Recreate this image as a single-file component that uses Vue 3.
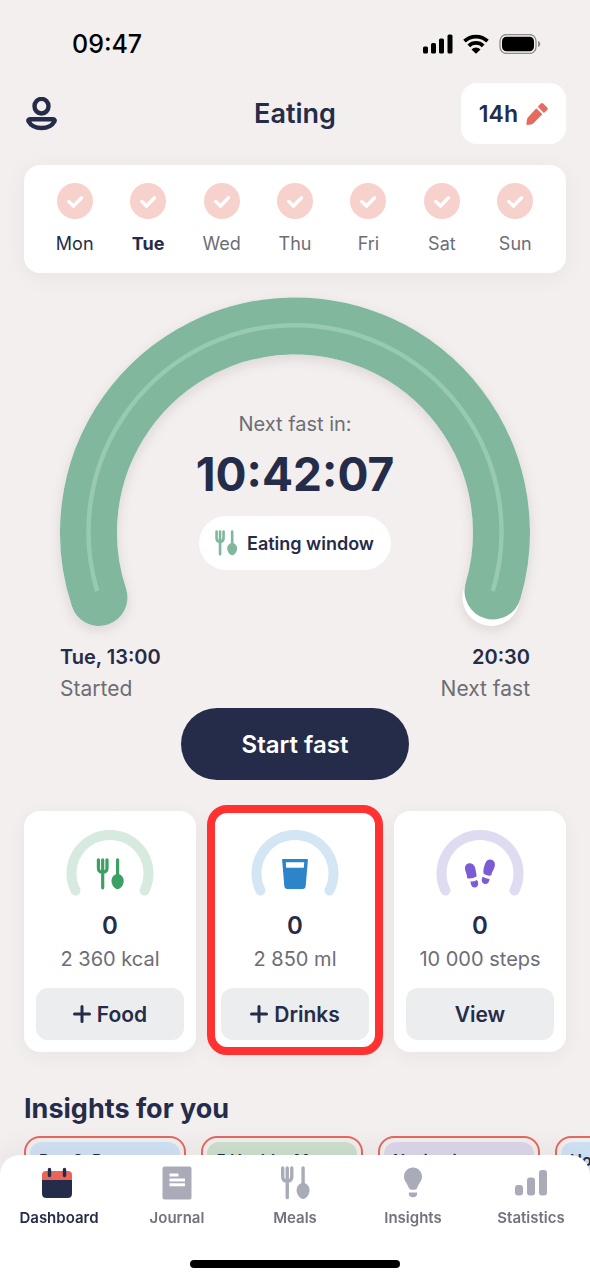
<script setup>
const days = [
  { name: 'Mon', state: 'past' },
  { name: 'Tue', state: 'today' },
  { name: 'Wed', state: '' },
  { name: 'Thu', state: '' },
  { name: 'Fri', state: '' },
  { name: 'Sat', state: '' },
  { name: 'Sun', state: '' }
]

const trackers = [
  { id: 'food', value: '0', goal: '2 360 kcal', action: 'Food', add: true },
  { id: 'drinks', value: '0', goal: '2 850 ml', action: 'Drinks', add: true, highlighted: true },
  { id: 'steps', value: '0', goal: '10 000 steps', action: 'View', add: false }
]

const insights = [
  { title: 'Day 2: Pro', tone: 'blue' },
  { title: '5 Healthy Meat', tone: 'green' },
  { title: 'Navigating', tone: 'purple' },
  { title: 'Ho', tone: 'blue' }
]

const tabs = [
  { id: 'dashboard', label: 'Dashboard', active: true },
  { id: 'journal', label: 'Journal' },
  { id: 'meals', label: 'Meals' },
  { id: 'insights', label: 'Insights' },
  { id: 'statistics', label: 'Statistics' }
]
</script>

<template>
  <div class="page">
    <svg class="defs" width="0" height="0" aria-hidden="true">
      <symbol id="cutlery" viewBox="0 0 28 32">
        <path d="M2.4 1.8v8.2q0 4.2 4.3 4.2t4.3-4.2V1.8M6.7 1.8v28M21.6 1.8v18" fill="none" stroke="currentColor" stroke-width="3.200" stroke-linecap="round" stroke-linejoin="round" />
        <path d="M21.6 16c3.4 0 6.1 3.2 6.1 6.9 0 3.6-2.9 8.1-6.1 8.1s-6.1-4.5-6.1-8.1c0-3.7 2.700-6.900 6.100-6.900z" fill="currentColor" />
      </symbol>
    </svg>

    <div class="status">
      <span class="clock">09:47</span>
      <div class="signals">
        <svg width="30" height="20" viewBox="0 0 30 20" aria-hidden="true">
          <rect x="0" y="12.500" width="5" height="7" rx="1.500" />
          <rect x="8" y="9" width="5" height="10.500" rx="1.500" />
          <rect x="16" y="4.500" width="5" height="15" rx="1.500" />
          <rect x="24.500" y="0.500" width="5" height="19" rx="1.500" />
        </svg>
        <svg width="26" height="20" viewBox="0 0 26 20" aria-hidden="true">
          <path d="M1.500 7.200a16.500 16.500 0 0 1 23 0M5.800 11.800a10.300 10.300 0 0 1 14.400 0" fill="none" stroke="#000" stroke-width="3.800" />
          <path d="M13 19.800l-4.500-4.400a6.500 6.500 0 0 1 9 0z" />
        </svg>
        <svg width="42" height="20" viewBox="0 0 42 20" aria-hidden="true">
          <rect x="1" y="0.500" width="36" height="19" rx="6.500" fill="none" stroke="#8f8c8c" stroke-width="1.300" />
          <rect x="3" y="2.800" width="32" height="14.400" rx="4.500" />
          <path d="M39 6.800c3 1.500 3 5 0 6.500z" fill="#8f8c8c" />
        </svg>
      </div>
    </div>

    <header class="header">
      <button class="profile" aria-label="Profile">
        <svg width="32" height="34" viewBox="0 0 32 34" fill="none" stroke="#252c49" stroke-width="4.400" aria-hidden="true">
          <ellipse cx="15.500" cy="9.200" rx="7" ry="7.300" />
          <path d="M4 22.200h23c1.600 0 2 1.200 1.400 2.300-2.200 4-7 6.500-12.900 6.500S4.800 28.500 2.600 24.500C2 23.400 2.400 22.200 4 22.200z" />
        </svg>
      </button>
      <h1>Eating</h1>
      <button class="plan">
        <span>14h</span>
        <svg width="22" height="24" viewBox="0 0 22 24" fill="#e76a60" aria-hidden="true">
          <path d="M10.300 6.200l6 6L7.500 21.300q-1 1-2.500 1.200L1.200 23q-.9 0-.8-.9l.5-4.200q.2-1.500 1.200-2.600z" />
          <path d="M11.800 4.700l3-3.200q1.200-1.200 2.400 0l4 4q1.100 1.200 0 2.400l-3.300 3z" />
        </svg>
      </button>
    </header>

    <section class="week" aria-label="Week">
      <div v-for="day in days" :key="day.name" class="day" :class="day.state">
        <svg width="36" height="36" viewBox="0 0 36 36" aria-hidden="true">
          <circle cx="18" cy="18" r="18" fill="#f7d1cc" />
          <path d="M11.800 18.500l4.700 4.500 8-8.300" fill="none" stroke="#fff" stroke-width="3.400" stroke-linecap="round" />
        </svg>
        <span>{{ day.name }}</span>
      </div>
    </section>

    <section class="timer">
      <div class="dial">
        <svg class="ring" viewBox="0 0 470 330" fill="none" aria-hidden="true">
          <g class="arc" stroke-width="57" stroke-linecap="round">
            <path d="M39 301.500A206.500 206.500 0 1 1 431 301.500" stroke="#fff" />
            <path d="M39 301.500A206.500 206.500 0 1 1 433 295" stroke="#81b79d" />
          </g>
          <path d="M37.200 295A206.500 206.500 0 1 1 432.800 295" stroke="#98c9b1" stroke-width="4.500" />
        </svg>
        <div class="countdown">
          <p class="caption">Next fast in:</p>
          <p class="time">10:42:07</p>
          <span class="pill">
            <svg width="24" height="26" aria-hidden="true"><use href="#cutlery" /></svg>
            Eating window
          </span>
        </div>
      </div>
      <div class="bounds">
        <div><strong>Tue, 13:00</strong><span>Started</span></div>
        <div class="end"><strong>20:30</strong><span>Next fast</span></div>
      </div>
      <button class="start">Start fast</button>
    </section>

    <section class="trackers">
      <article v-for="t in trackers" :key="t.id" class="tracker" :class="[t.id, { highlighted: t.highlighted }]">
        <div class="gauge">
          <svg width="88" height="66" viewBox="0 0 88 66" fill="none" aria-hidden="true">
            <path class="track" d="M9.500 60.500A38.500 38.500 0 1 1 78.500 60.500" stroke-width="10" stroke-linecap="round" />
          </svg>
          <svg v-if="t.id === 'food'" class="glyph" width="28" height="32" aria-hidden="true"><use href="#cutlery" /></svg>
          <svg v-else-if="t.id === 'drinks'" class="glyph" width="26" height="32" viewBox="0 0 26 32" aria-hidden="true">
            <path fill-rule="evenodd" d="M.8 1h24.400q.8 0 .7.900L23.700 28q-.3 3-3 3H5.300q-2.700 0-3-3L.1 1.900Q0 1 .8 1zM3.800 4.300l.4 5.400h17.600l.4-5.400z" fill="currentColor" />
          </svg>
          <svg v-else class="glyph" width="32" height="32" viewBox="0 0 32 32" fill="currentColor" aria-hidden="true">
            <path d="M3.200 20.300C3.200 15.500.6 13 1 9.200 1.500 6 4 4.800 6.400 5.200c4.100.6 5 4.600 5.600 8.800.3 2.300.8 3.400.5 4.600-2.800 1.700-5.600 2.200-9.300 1.700z" />
            <path d="M6.400 23.600q4 .1 6.500-1.600c2.200 2.800 1.700 6.600-1.400 7.400-3.500.8-4.600-2.200-5.100-5.800z" />
            <path d="M19.600 15.600c-.5-2-.1-4.800.6-7C21.300 4.400 23 1 26.800 1.600c3 .4 4.300 2.900 4.100 5.400-.3 4.200-2.900 6-3.600 10.600-3.200.4-5.500-.2-7.700-2z" />
            <path d="M18.700 18.800q3.200 2 6.900 2.200c-.3 3.600-2.500 5.700-5.200 4.900-3-1-3.300-4.300-1.700-7.100z" />
          </svg>
        </div>
        <p class="value">{{ t.value }}</p>
        <p class="goal">{{ t.goal }}</p>
        <button class="action">
          <svg v-if="t.add" width="18" height="18" viewBox="0 0 18 18" aria-hidden="true">
            <path d="M9 1.500v15M1.500 9h15" stroke="currentColor" stroke-width="3" stroke-linecap="round" />
          </svg>
          {{ t.action }}
        </button>
      </article>
    </section>

    <section class="insights">
      <h2>Insights for you</h2>
      <div class="stories">
        <article v-for="story in insights" :key="story.title" class="story">
          <div class="cover" :class="story.tone">{{ story.title }}</div>
        </article>
      </div>
    </section>

    <nav class="tabbar">
      <div class="tabs">
        <a v-for="tab in tabs" :key="tab.id" href="#" class="tab" :class="{ active: tab.active }">
          <svg v-if="tab.id === 'dashboard'" width="36" height="34" viewBox="0 0 36 34" aria-hidden="true">
            <path d="M1 13h30v14.500q0 4.500-4.500 4.500h-21Q1 32 1 27.500z" fill="#252c49" />
            <path d="M1 14V9q0-4 4-4h22q4 0 4 4v5z" fill="#e96459" />
            <path d="M8.500 3.500v6M23.500 3.500v6" stroke="#252c49" stroke-width="3.400" stroke-linecap="round" />
          </svg>
          <svg v-else-if="tab.id === 'journal'" width="30" height="34" viewBox="0 0 30 34" aria-hidden="true">
            <rect x="0.500" y="0.500" width="29" height="33" rx="2" fill="#a9abb8" />
            <path d="M7.500 9h9M7.500 14h15.500M7.500 18.800h15.500" stroke="#fff" stroke-width="3" />
          </svg>
          <svg v-else-if="tab.id === 'meals'" width="30" height="34" aria-hidden="true"><use href="#cutlery" /></svg>
          <svg v-else-if="tab.id === 'insights'" width="20" height="34" viewBox="0 0 20 34" fill="#a9abb8" aria-hidden="true">
            <path d="M10 1.500c5 0 9 4 9 9 0 4.500-3 6.400-4.400 10.500q-.9 2.800-2.800 2.800H8.200q-1.900 0-2.800-2.800C4 16.900 1 15 1 10.500c0-5 4-9 9-9z" />
            <path d="M5.800 26.600h8.400q.4 4.700-4.200 4.700t-4.200-4.700z" />
          </svg>
          <svg v-else width="34" height="34" viewBox="0 0 34 34" fill="#a9abb8" aria-hidden="true">
            <rect x="1" y="19" width="8" height="10.500" rx="3" />
            <rect x="13" y="11.500" width="8" height="18" rx="3" />
            <rect x="25" y="4" width="8" height="25.500" rx="3" />
          </svg>
          <span>{{ tab.label }}</span>
        </a>
      </div>
      <div class="home"></div>
    </nav>
  </div>
</template>

<style>
body {
  background: #f3efee;
}
</style>

<style scoped>
.page {
  box-sizing: border-box;
  min-height: 100vh;
  overflow: hidden;
  padding: 0 24px;
  background: #f3efee;
  color: #252c49;
  font-family: Inter, "Liberation Sans", sans-serif;
}

.defs {
  position: absolute;
}

svg {
  display: block;
  flex: none;
}

button {
  border: 0;
  padding: 0;
  background: none;
  color: inherit;
  font: inherit;
  cursor: pointer;
}

h1,
h2,
p {
  margin: 0;
}

.status {
  display: flex;
  align-items: center;
  justify-content: space-between;
  height: 83px;
  padding: 4px 25px 0 48px;
  box-sizing: border-box;
}

.clock {
  color: #000;
  font-size: 25px;
  font-weight: 500;
}

.signals {
  display: flex;
  gap: 10px;
}

.header {
  display: grid;
  grid-template-columns: 1fr auto 1fr;
  align-items: center;
}

.profile {
  justify-self: start;
  padding-left: 2px;
}

h1 {
  font-size: 27px;
  font-weight: 600;
}

.plan {
  justify-self: end;
  display: flex;
  align-items: center;
  gap: 8px;
  height: 61px;
  padding: 0 18px;
  border-radius: 16px;
  background: #fff;
  font-size: 23px;
  font-weight: 600;
}

.week {
  display: grid;
  grid-template-columns: repeat(7, 1fr);
  margin-top: 21px;
  padding: 18px 14px 17px;
  border-radius: 16px;
  background: #fff;
  box-shadow: 0 4px 24px rgba(60, 40, 50, 0.05);
}

.day {
  display: flex;
  flex-direction: column;
  align-items: center;
  gap: 13px;
  color: #6d6d75;
  font-size: 18px;
  line-height: 24px;
}

.day.past {
  color: #252c49;
}

.day.today {
  color: #252c49;
  font-weight: 700;
}

.timer {
  display: flex;
  flex-direction: column;
  align-items: center;
  padding: 23px 36px 0;
}

.dial {
  display: grid;
  width: 100%;
}

.ring,
.countdown {
  grid-area: 1 / 1;
}

.ring {
  width: 100%;
  overflow: visible;
}

.arc {
  filter: drop-shadow(0 4px 6px rgba(60, 40, 50, 0.12));
}

.countdown {
  display: flex;
  flex-direction: column;
  align-items: center;
  justify-content: center;
  padding-top: 58px;
}

.caption {
  color: #6d6d75;
  font-size: 20px;
  line-height: 28px;
}

.time {
  margin: 10px 0 16px;
  font-size: 46px;
  font-weight: 700;
  line-height: 52px;
}

.pill {
  display: flex;
  align-items: center;
  gap: 9px;
  height: 54px;
  padding: 0 17px 0 15px;
  border-radius: 27px;
  background: #fff;
  font-size: 18px;
  font-weight: 600;
}

.pill svg {
  color: #81b79d;
}

.bounds {
  display: flex;
  justify-content: space-between;
  width: 100%;
  margin-top: 15px;
  font-size: 21px;
  line-height: 32px;
}

.bounds div {
  display: flex;
  flex-direction: column;
}

.bounds strong {
  font-size: 20px;
  font-weight: 600;
}

.bounds span {
  color: #6d6d75;
}

.bounds .end {
  text-align: right;
}

.start {
  height: 72px;
  margin-top: 3px;
  padding: 0 61px;
  border-radius: 36px;
  background: #252c49;
  color: #fff;
  font-size: 24px;
  font-weight: 600;
}

.trackers {
  display: grid;
  grid-template-columns: repeat(3, 1fr);
  gap: 13px;
  margin-top: 31px;
}

.tracker {
  position: relative;
  display: flex;
  flex-direction: column;
  align-items: center;
  padding: 19px 12px 12px;
  border-radius: 16px;
  background: #fff;
  box-shadow: 0 4px 20px rgba(60, 40, 50, 0.05);
}

.tracker.highlighted::after {
  content: "";
  position: absolute;
  inset: -6px -2px -3px;
  border: 8px solid #ff3131;
  border-radius: 20px;
  pointer-events: none;
}

.gauge {
  display: grid;
  justify-items: center;
}

.gauge svg {
  grid-area: 1 / 1;
}

.gauge .glyph {
  margin-top: 28px;
}

.track {
  stroke: #d7eadf;
}

.drinks .track {
  stroke: #d4e6f4;
}

.steps .track {
  stroke: #dfdbf0;
}

.food .glyph {
  color: #3c9f63;
}

.drinks .glyph {
  color: #2e84c9;
}

.steps .glyph {
  color: #7b5cd6;
}

.value {
  margin-top: 14px;
  font-size: 24px;
  font-weight: 600;
  line-height: 32px;
}

.goal {
  margin-top: 2px;
  color: #6d6d75;
  font-size: 20px;
  line-height: 30px;
  white-space: nowrap;
}

.action {
  display: flex;
  align-items: center;
  justify-content: center;
  gap: 6px;
  width: 100%;
  height: 52px;
  margin-top: 14px;
  border-radius: 12px;
  background: #ecedef;
  font-size: 21px;
  font-weight: 600;
}

h2 {
  margin-top: 39px;
  font-size: 27px;
  font-weight: 700;
  line-height: 36px;
}

.stories {
  display: flex;
  gap: 15px;
  margin: 9px -24px 0 0;
  overflow: hidden;
}

.story {
  flex: 0 0 162px;
  box-sizing: border-box;
  height: 110px;
  padding: 4px;
  border: 2px solid #e4695f;
  border-radius: 16px;
}

.cover {
  box-sizing: border-box;
  height: 100%;
  padding: 7px 9px 0;
  border-radius: 12px;
  font-size: 16px;
  font-weight: 600;
  line-height: 22px;
  white-space: nowrap;
  overflow: hidden;
}

.blue {
  background: #cfe2f4;
}

.green {
  background: #cce0cd;
}

.purple {
  background: #dcd7eb;
}

.tabbar {
  position: fixed;
  right: 0;
  bottom: 0;
  left: 0;
  padding: 11px 0 12px;
  border-radius: 20px 20px 0 0;
  background: #fff;
  box-shadow: 0 -6px 30px rgba(60, 40, 50, 0.06);
}

.tabs {
  display: grid;
  grid-template-columns: repeat(5, 1fr);
}

.tab {
  display: flex;
  flex-direction: column;
  align-items: center;
  gap: 8px;
  color: #a9abb8;
  font-size: 15px;
  font-weight: 600;
  line-height: 20px;
  text-decoration: none;
}

.tab span {
  color: #73737f;
}

.tab.active span {
  color: #252c49;
}

.home {
  width: 210px;
  height: 8px;
  margin: 32px auto 0;
  border-radius: 4px;
  background: #000;
}
</style>
